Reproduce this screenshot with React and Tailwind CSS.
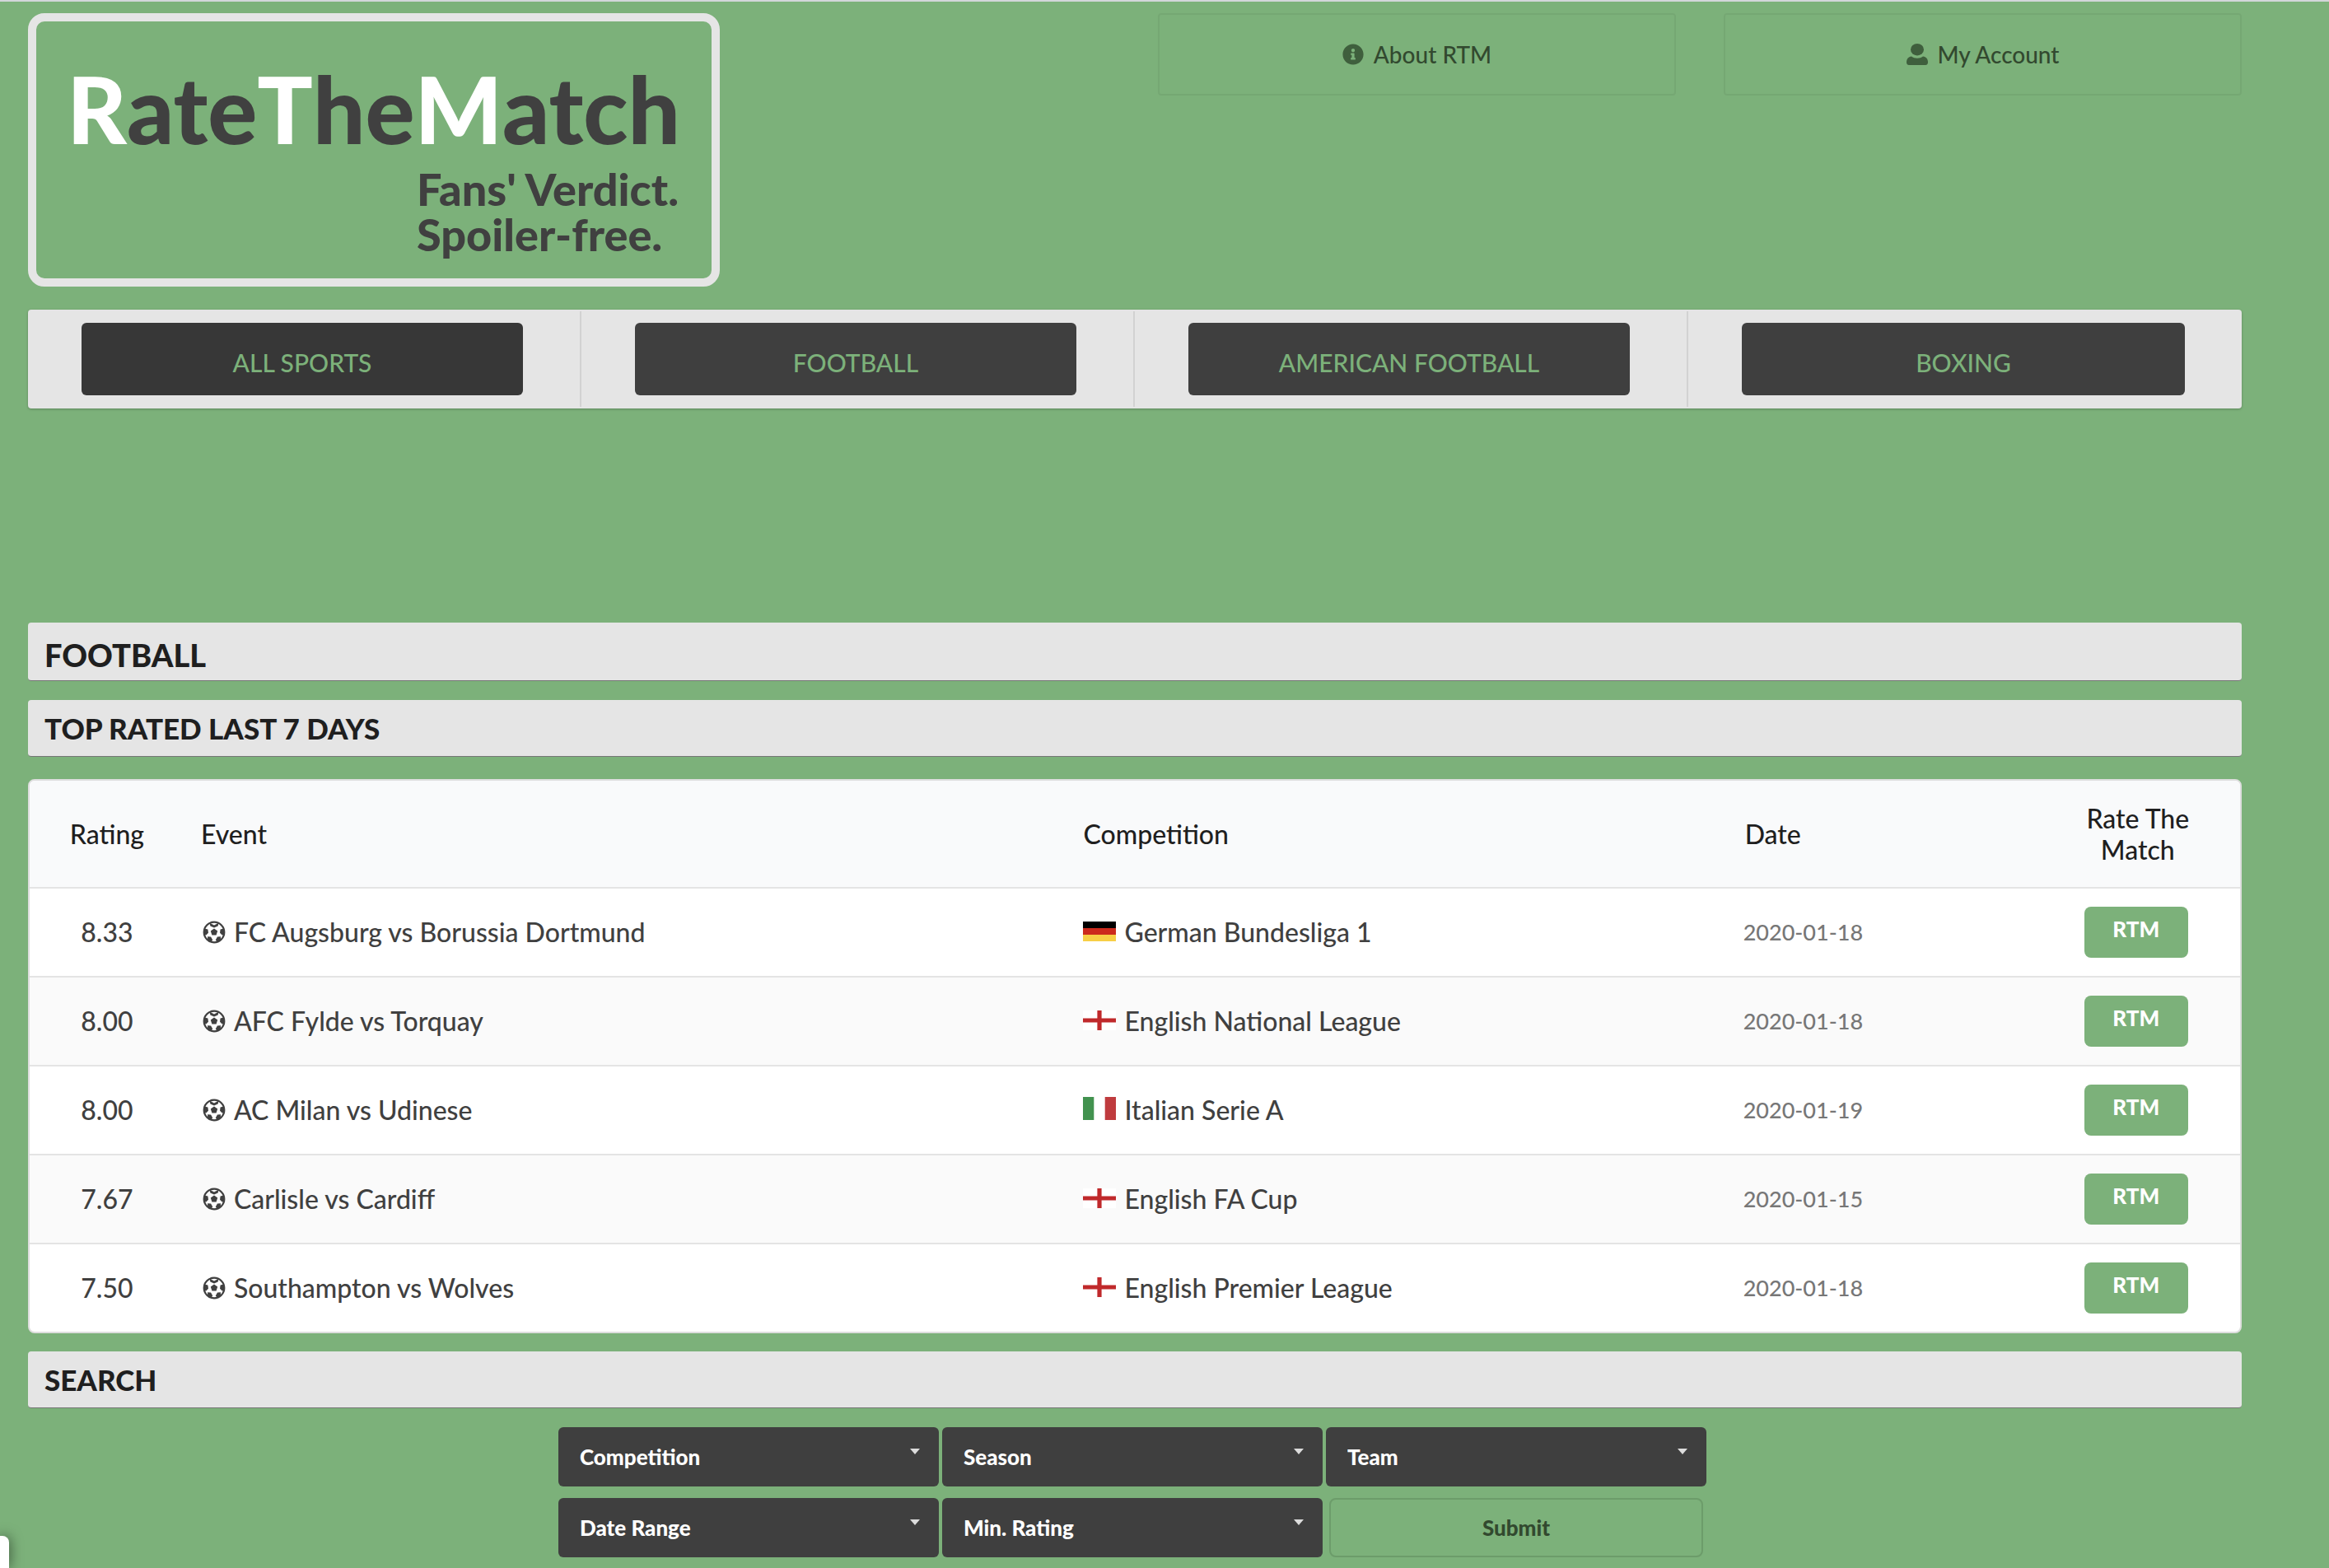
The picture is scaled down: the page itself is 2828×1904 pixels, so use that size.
import React, { useState } from 'react';
import { FaInfoCircle } from 'react-icons/fa';

const SPORTS = ['ALL SPORTS', 'FOOTBALL', 'AMERICAN FOOTBALL', 'BOXING'];

const MATCHES = [
  { rating: '8.33', event: 'FC Augsburg vs Borussia Dortmund', flag: 'de', competition: 'German Bundesliga 1', date: '2020-01-18' },
  { rating: '8.00', event: 'AFC Fylde vs Torquay', flag: 'en', competition: 'English National League', date: '2020-01-18' },
  { rating: '8.00', event: 'AC Milan vs Udinese', flag: 'it', competition: 'Italian Serie A', date: '2020-01-19' },
  { rating: '7.67', event: 'Carlisle vs Cardiff', flag: 'en', competition: 'English FA Cup', date: '2020-01-15' },
  { rating: '7.50', event: 'Southampton vs Wolves', flag: 'en', competition: 'English Premier League', date: '2020-01-18' },
];

const FILTERS = ['Competition', 'Season', 'Team', 'Date Range', 'Min. Rating'];

function Flag({ code }) {
  if (code === 'de') {
    return (
      <svg className="w-10 h-6 mb-0.5 shrink-0" viewBox="0 0 40 24">
        <path fill="#000" d="M0 0h40v8H0z" />
        <path fill="#cc2a1d" d="M0 8h40v8H0z" />
        <path fill="#f7cf46" d="M0 16h40v8H0z" />
      </svg>
    );
  }
  if (code === 'it') {
    return (
      <svg className="w-10 h-7 mb-1 shrink-0" viewBox="0 0 40 28">
        <path fill="#fff" d="M0 0h40v28H0z" />
        <path fill="#42924f" d="M0 0h13.3v28H0z" />
        <path fill="#bf3b3e" d="M26.7 0H40v28H26.7z" />
      </svg>
    );
  }
  return (
    <svg className="w-10 h-6 mb-0.5 shrink-0" viewBox="0 0 40 24">
      <path fill="#fff" d="M0 0h40v24H0z" />
      <path fill="#c0292b" d="M17.4 0h5.2v24h-5.2zM0 9.6h40v4.8H0z" />
    </svg>
  );
}

function Ball() {
  return (
    <svg className="w-7 h-7 shrink-0" viewBox="0 0 28 28">
      <circle cx="14" cy="14" r="12.3" fill="none" stroke="#404040" strokeWidth="2.2" />
      <g fill="#404040">
        <path d="M14 9.600l4.200 3-1.600 5h-5.200l-1.600-5z" />
        <path d="M8.400 2.400L14 5.400l5.600-3-1 4.200L14 8.400l-4.600-1.800z" />
        <path d="M25.600 9.400l-4 1.200-.6 4.200 3 3 2.200-2z" />
        <path d="M2.400 9.400l4 1.200.6 4.200-3 3-2.200-2z" />
        <path d="M21.800 23.400l.2-4.200-4 .4-2.200 3.600 1.600 2.600z" />
        <path d="M6.200 23.400L6 19.200l4 .4 2.200 3.600-1.600 2.600z" />
      </g>
    </svg>
  );
}

function SectionBar({ title, large }) {
  return (
    <div className={`bg-[#e5e5e5] border-b border-[#767676] rounded px-5 ${large ? 'pt-2' : 'pt-0.5 pb-0.5'}`}>
      <h2 className={large ? 'text-[38px] leading-[62px] font-black' : 'text-[35px] leading-[64px] font-black'}>{title}</h2>
    </div>
  );
}

function Filter({ label }) {
  return (
    <div className="relative">
      <select
        aria-label={label}
        className="appearance-none block w-full h-[72px] pl-[26px] pr-14 rounded-md bg-[#3f3f3f] text-white text-[26px] font-black"
      >
        <option>{label}</option>
      </select>
      <svg className="absolute right-[23px] top-[26px] w-3 h-2 pointer-events-none" viewBox="0 0 12 8">
        <path fill="#dcdcdc" d="M0 0h12L6 7z" />
      </svg>
    </div>
  );
}

export default function App() {
  const [sport, setSport] = useState('ALL SPORTS');

  return (
    <div className="relative min-h-screen overflow-hidden bg-[#7cb17a] border-t-2 border-[#d3d6da] pl-[34px] pr-[106px] pt-[14px] font-[Lato,sans-serif] text-[#1f1f1f]">
      <header className="flex justify-between items-start">
        <a href="#home" className="block w-[840px] h-[332px] border-10 border-[#e5e5e5] rounded-[20px] pt-12 pr-[38px] text-[#404040] font-black">
          <h1 className="flex justify-end text-[112px] leading-[116px]">
            <span className="text-white">R</span>
            <span>ate</span>
            <span className="text-white">T</span>
            <span>he</span>
            <span className="text-white">M</span>
            <span>atch</span>
          </h1>
          <p className="ml-[462px] mt-3 text-[54px] leading-[55px] whitespace-nowrap">
            Fans' Verdict.
            <br />
            Spoiler-free.
          </p>
        </a>
        <nav className="flex w-[1316px] gap-[58px]">
          <a href="#about" className="flex-1 h-[100px] flex items-center justify-center gap-3 border-2 border-black/5 rounded text-[28px] font-medium text-[#32492f]">
            <FaInfoCircle className="w-[26px] h-[26px] text-[#3f5f3d]" />
            About RTM
          </a>
          <a href="#account" className="flex-1 h-[100px] flex items-center justify-center gap-3 border-2 border-black/5 rounded text-[28px] font-medium text-[#32492f]">
            <svg className="w-[26px] h-[26px]" viewBox="0 0 26 26" fill="#3f5f3d">
              <ellipse cx="13" cy="7.2" rx="8" ry="7.2" />
              <path d="M6 15.4c4 3 10 3 14 0 4 .4 6 3.2 6 7.2 0 2.400-1 3.400-3 3.400H3c-2 0-3-1-3-3.400 0-4 2-6.800 6-7.200z" />
            </svg>
            My Account
          </a>
        </nav>
      </header>

      <nav className="mt-7 grid grid-cols-4 h-[120px] py-0.5 rounded bg-[#e5e5e5] shadow-[0_1px_3px_rgba(0,0,0,0.25)] divide-x-2 divide-[#d2d2d2]">
        {SPORTS.map((name) => (
          <div key={name} className="pl-[65px] pr-[69px] py-[14px]">
            <button
              onClick={() => setSport(name)}
              className={`w-full h-[88px] pt-2 rounded-md text-[30px] font-medium text-[#7cb17a] ${sport === name ? 'bg-[#373737]' : 'bg-[#3f3f3f]'}`}
            >
              {name}
            </button>
          </div>
        ))}
      </nav>

      <main className="mt-[260px]">
        <SectionBar title="FOOTBALL" large />
        <div className="mt-[23px]">
          <SectionBar title="TOP RATED LAST 7 DAYS" />
        </div>

        <div className="mt-[27px] border-2 border-[#dedede] rounded-lg overflow-hidden bg-white">
          <table className="w-full table-fixed text-[32px] leading-[38px] font-medium text-[#404040]">
            <colgroup>
              <col className="w-[7%]" />
              <col className="w-[40%]" />
              <col className="w-[30%]" />
              <col className="w-[13%]" />
              <col className="w-[10%]" />
            </colgroup>
            <thead>
              <tr className="h-[130px] bg-[#f9fafb] border-b-2 border-[#e4e4e4] text-[#1f1f1f] text-left">
                <th className="font-medium text-center">Rating</th>
                <th className="font-medium pl-5">Event</th>
                <th className="font-medium pl-[18px]">Competition</th>
                <th className="font-medium pl-4">Date</th>
                <th className="font-medium pl-[74px] pr-[54px] text-center">Rate The Match</th>
              </tr>
            </thead>
            <tbody>
              {MATCHES.map((m) => (
                <tr key={m.event} className="h-[108px] border-b-2 border-[#e4e4e4] last:border-b-0 last:h-[107px] even:bg-[#fafafa]">
                  <td className="text-center">{m.rating}</td>
                  <td className="pl-[22px]">
                    <div className="flex items-center gap-2.5"><Ball />{m.event}</div>
                  </td>
                  <td className="pl-[18px]">
                    <div className="flex items-center gap-2.5"><Flag code={m.flag} />{m.competition}</div>
                  </td>
                  <td className="pl-[14px] text-[27px] text-[#777]">{m.date}</td>
                  <td className="pl-4">
                    <button className="block mx-auto w-[126px] h-[62px] pb-2 rounded-lg bg-[#7cb17a] text-white text-[26px] font-black">RTM</button>
                  </td>
                </tr>
              ))}
            </tbody>
          </table>
        </div>

        <div className="mt-[22px]">
          <SectionBar title="SEARCH" />
        </div>

        <form className="mt-[23px] mx-auto w-[1400px] pr-1.5 grid grid-cols-3 gap-x-1 gap-y-[14px]">
          {FILTERS.map((label) => (
            <Filter key={label} label={label} />
          ))}
          <button type="button" className="mx-1 h-[72px] rounded-lg border-2 border-[#6c9c6a] text-[26px] font-black text-[#32492f]">
            Submit
          </button>
        </form>
      </main>

      {/* edge of the collapsed status panel */}
      <div className="absolute left-0 bottom-0 w-[11px] h-[39px] rounded-tr-lg bg-white shadow-[0_0_16px_rgba(0,0,0,0.6)]" />
    </div>
  );
}
